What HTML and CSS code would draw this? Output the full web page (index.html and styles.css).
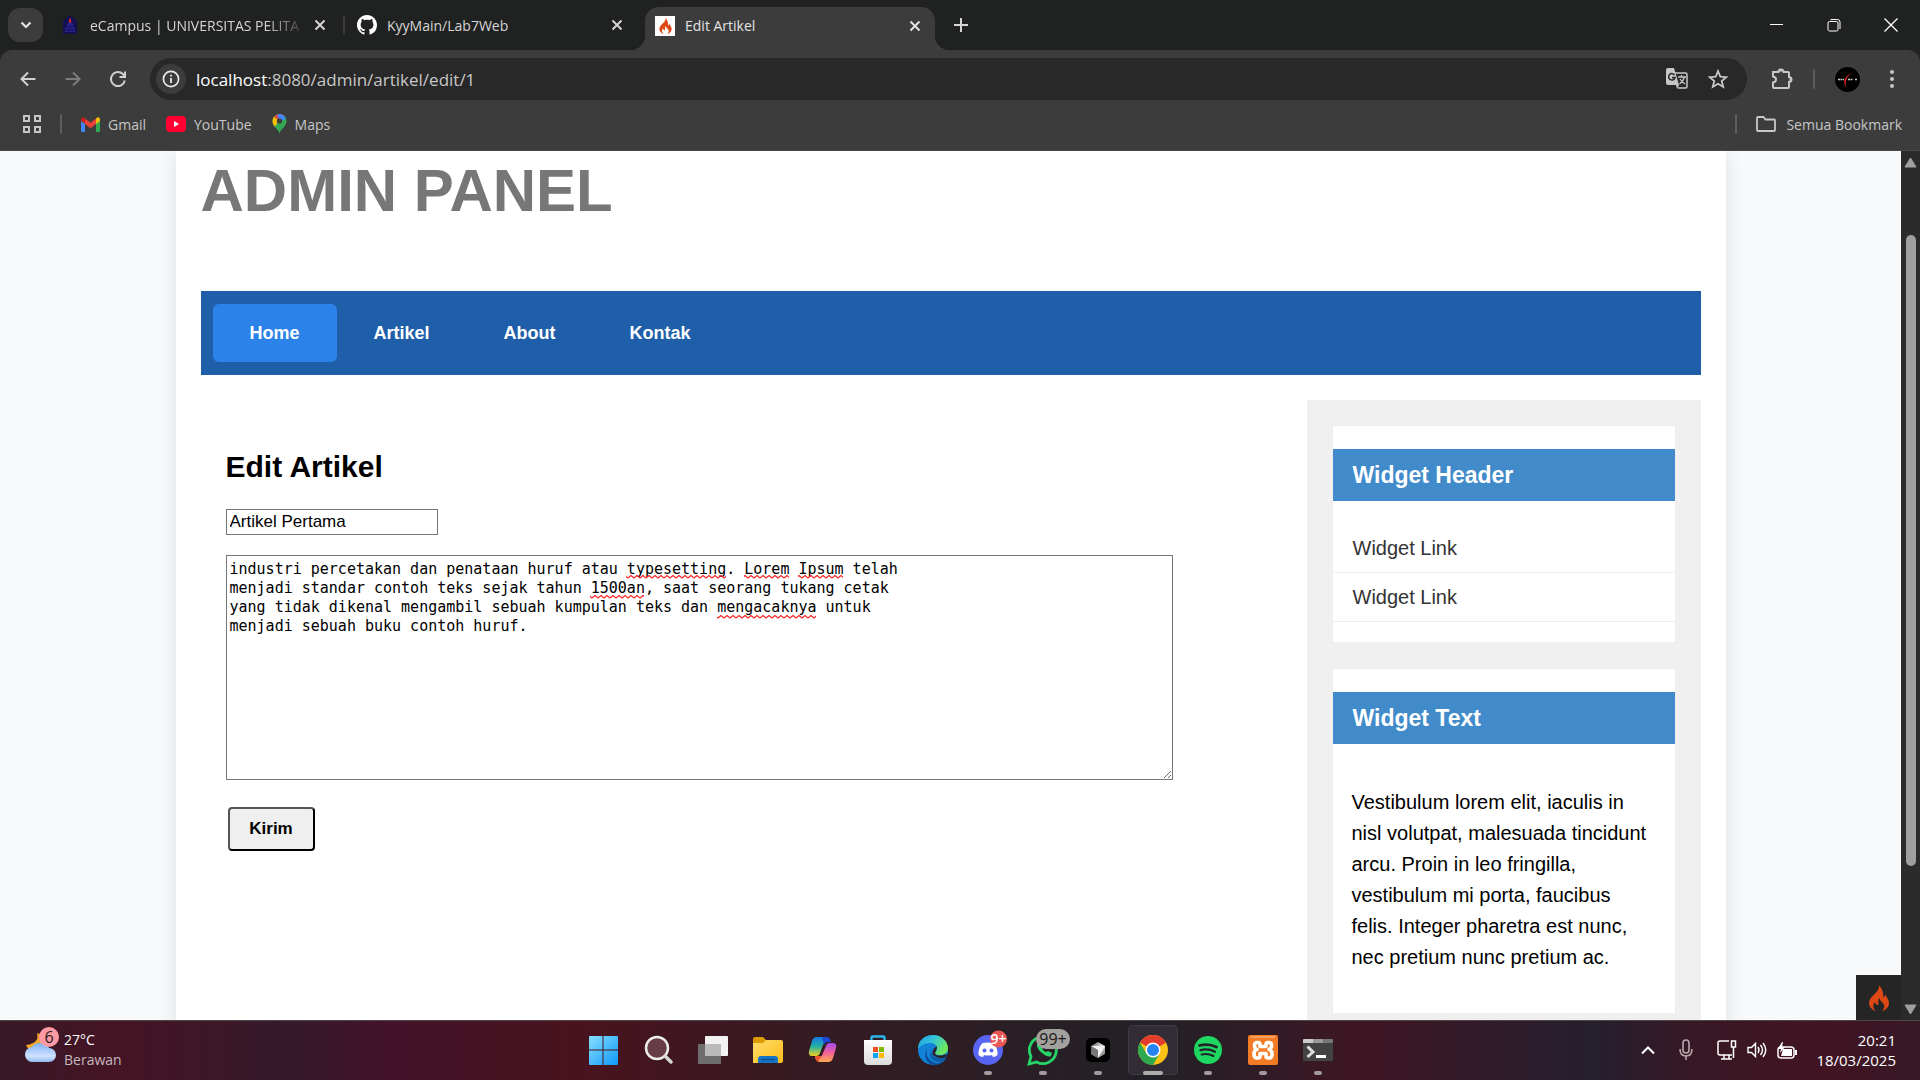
FILE: index.html
```html
<!DOCTYPE html>
<html lang="id">
<head>
<meta charset="utf-8">
<title>Edit Artikel</title>
<link rel="stylesheet" href="styles.css">
</head>
<body>
<svg width="0" height="0" class="defs" aria-hidden="true">
  <defs>
    <symbol id="flame" viewBox="0 0 20 26">
      <path fill="#dd4814" d="M9.500 0C11 3 8.500 6 5.500 9 2.500 12 0 14.500 0 18c0 3.500 2.500 6.300 6 7.800l.6-.5C5 24 4.300 22.800 4.300 21.200c0-1.700.9-3 1.800-4.400.2 1.600.8 2.700 1.800 3.100 1 .3 1.800-.5 1.600-1.600-.3-1.700-.6-3.300.9-5.300.5 2.300 1.500 3.200 2.900 4.500 2.400 2.300 2.900 5.300.2 7.700l.4.6C17.500 24.500 20 21.800 20 18c0-3.400-2.300-6-4-8.500-.2 1.400-.8 2.400-1.900 3C14.800 8.300 13.300 3 9.500 0z"/>
    </symbol>
    <symbol id="x" viewBox="0 0 12 12"><path d="M1.500 1.500l9 9M10.500 1.500l-9 9" stroke="currentColor" stroke-width="2"/></symbol>
    <linearGradient id="win" x1="0" y1="0" x2="1" y2="1"><stop offset="0" stop-color="#86e0ff"/><stop offset="1" stop-color="#0f97f8"/></linearGradient>
    <linearGradient id="cloud" x1="0" y1="0" x2="0" y2="1"><stop offset="0" stop-color="#7fb0f5"/><stop offset=".7" stop-color="#cfe2ff"/><stop offset="1" stop-color="#90b8f0"/></linearGradient>
    <linearGradient id="folder" x1="0" y1="0" x2="1" y2="1"><stop offset="0" stop-color="#ffdc6b"/><stop offset="1" stop-color="#fcbc16"/></linearGradient>
    <linearGradient id="copL" x1="0" y1="0" x2="0" y2="1"><stop offset="0" stop-color="#1478e8"/><stop offset=".5" stop-color="#25b3a0"/><stop offset="1" stop-color="#f0d020"/></linearGradient>
    <linearGradient id="copR" x1="0" y1="0" x2="0" y2="1"><stop offset="0" stop-color="#a04df0"/><stop offset=".5" stop-color="#f0609a"/><stop offset="1" stop-color="#ffa950"/></linearGradient>
    <linearGradient id="edgeT" x1="0" y1="0" x2="1" y2=".5"><stop offset="0" stop-color="#1b9de2"/><stop offset=".5" stop-color="#35c4d8"/><stop offset="1" stop-color="#6ee85a"/></linearGradient>
    <linearGradient id="store" x1="0" y1="0" x2="0" y2="1"><stop offset="0" stop-color="#fff"/><stop offset="1" stop-color="#dcdcdc"/></linearGradient>
    <linearGradient id="cube" x1="0" y1="0" x2="1" y2="1"><stop offset="0" stop-color="#555"/><stop offset=".5" stop-color="#ddd"/><stop offset="1" stop-color="#666"/></linearGradient>
    <pattern id="wave" width="6" height="4" patternUnits="userSpaceOnUse"><path d="M-1 1.800l1 1.200 3-2.500 3 2.500 1-1" fill="none" stroke="#f22" stroke-width="1.200"/></pattern>
  </defs>
</svg>

<header class="browser">
  <div class="tabstrip">
    <button class="tab-search" aria-label="Cari tab"><svg width="12" height="8" viewBox="0 0 12 8"><path d="M1.500 1.500L6 6l4.500-4.500" fill="none" stroke="#e3e3e3" stroke-width="2.200"/></svg></button>
    <div class="tab tab-first">
      <svg class="fav" viewBox="0 0 20 20"><path d="M3 19V7q7-12 14 0v12z" fill="#151052"/><path d="M5 17v-4l2-1V9l3-3 3 3v3l2 1v4z" fill="#26208a"/><path d="M10 3c-2 3-1 5 0 5s2-2 0-5z" fill="#d02a20"/><path d="M6 15h8M8 12h4" stroke="#100b3c"/></svg>
      <span class="tab-title fade">eCampus | UNIVERSITAS PELITA</span>
      <button class="tab-close" aria-label="Tutup"><svg width="12" height="12"><use href="#x"/></svg></button>
    </div>
    <i class="sep"></i>
    <div class="tab tab-second">
      <svg class="fav" viewBox="0 0 16 16"><path fill="#fff" d="M8 0C3.580 0 0 3.580 0 8c0 3.540 2.290 6.530 5.470 7.590.4.070.55-.17.55-.38 0-.19-.01-.82-.01-1.490-2.010.37-2.530-.49-2.690-.94-.09-.23-.48-.94-.82-1.130-.28-.15-.68-.52-.01-.53.63-.01 1.080.58 1.230.82.72 1.210 1.870.87 2.330.66.070-.52.28-.87.51-1.070-1.780-.2-3.640-.89-3.640-3.950 0-.87.31-1.590.82-2.150-.08-.2-.36-1.020.08-2.120 0 0 .67-.21 2.200.82.64-.18 1.320-.27 2-.27s1.360.09 2 .27c1.530-1.040 2.200-.82 2.200-.82.44 1.100.16 1.920.08 2.120.51.56.82 1.270.82 2.150 0 3.070-1.870 3.750-3.650 3.950.29.25.54.73.54 1.480 0 1.070-.01 1.930-.01 2.200 0 .21.15.46.55.38A8.010 8.010 0 0 0 16 8c0-4.420-3.580-8-8-8z"/></svg>
      <span class="tab-title">KyyMain/Lab7Web</span>
      <button class="tab-close" aria-label="Tutup"><svg width="12" height="12"><use href="#x"/></svg></button>
    </div>
    <div class="tab active">
      <span class="fav fav-ci"><svg width="13" height="16"><use href="#flame"/></svg></span>
      <span class="tab-title">Edit Artikel</span>
      <button class="tab-close" aria-label="Tutup"><svg width="12" height="12"><use href="#x"/></svg></button>
    </div>
    <button class="new-tab" aria-label="Tab baru"><svg width="14" height="14" viewBox="0 0 14 14"><path d="M7 0v14M0 7h14" stroke="#d5d5d5" stroke-width="2"/></svg></button>
    <div class="window-controls">
      <button aria-label="Minimalkan"><svg width="14" height="14"><path d="M0 6.500h13" stroke="#fff"/></svg></button>
      <button aria-label="Pulihkan"><svg width="14" height="14" fill="none" stroke="#fff"><rect x="1" y="3.500" width="10" height="9.500" rx="1.500"/><path d="M3.500 1.500h7q2.500 0 2.500 2.500v7"/></svg></button>
      <button aria-label="Tutup"><svg width="14" height="14"><path d="M.5.5l13 13M13.500.5l-13 13" stroke="#fff" stroke-width="1.300"/></svg></button>
    </div>
  </div>

  <div class="toolbar">
    <button class="tool" aria-label="Kembali"><svg width="16" height="16" viewBox="0 0 16 16" fill="none" stroke="#d0d0d0" stroke-width="2"><path d="M15.500 8H2M8 1.500L1.500 8 8 14.500"/></svg></button>
    <button class="tool" aria-label="Maju"><svg width="16" height="16" viewBox="0 0 16 16" fill="none" stroke="#7c7c7c" stroke-width="2"><path d="M.5 8H14M8 1.500L14.500 8 8 14.500"/></svg></button>
    <button class="tool" aria-label="Muat ulang"><svg width="16" height="16" viewBox="0 0 16 16" fill="none" stroke="#d0d0d0" stroke-width="2"><path d="M14.800 9.500A7 7 0 1 1 13 3.200L15 5.500M15 .5v5.500H9.500"/></svg></button>
    <div class="omnibox">
      <button class="site-info" aria-label="Info situs"><svg width="18" height="18" viewBox="0 0 18 18"><circle cx="9" cy="9" r="7.600" fill="none" stroke="#e8e8e8" stroke-width="1.700"/><path d="M9 8v5M9 4.800v1.800" stroke="#e8e8e8" stroke-width="1.800"/></svg></button>
      <span class="url"><span class="host">localhost</span>:8080/admin/artikel/edit/1</span>
      <button class="plain" aria-label="Terjemahkan"><svg width="22" height="22" viewBox="0 0 22 22"><path d="M9 5h10.500q1.500 0 1.500 1.500v12q0 1.500-1.500 1.500H12" fill="none" stroke="#c7c7c7" stroke-width="1.500"/><path d="M2 0h6l5 17H2q-2 0-2-2V2q0-2 2-2zM10 17h3l-2 4z" fill="#c7c7c7"/><path d="M8.500 7A3.200 3.200 0 1 0 9 9.500H6" fill="none" stroke="#282828" stroke-width="1.500"/><path d="M12 9h8M15.500 7v2M18.500 9q-1 4-5 7M14 11q2 3 5 5" fill="none" stroke="#c7c7c7" stroke-width="1.300"/></svg></button>
      <button class="plain" aria-label="Tandai"><svg width="20" height="20" viewBox="0 0 20 20"><path d="M10 2l2.300 5.600 6 .5-4.600 3.900 1.500 5.900L10 14.700 4.800 17.900l1.500-5.900L1.700 8.100l6-.5z" fill="none" stroke="#c7c7c7" stroke-width="1.800"/></svg></button>
    </div>
    <button class="ext" aria-label="Ekstensi"><svg width="22" height="22" viewBox="0 0 22 22"><path d="M2 4h5.500a2.500 2.500 0 0 1 5 0H17q1 0 1 1v4a2.500 2.500 0 0 1 0 5v5q0 1-1 1H3q-1 0-1-1v-4.500q3-.500 3-3T2 8.500z" fill="none" stroke="#c7c7c7" stroke-width="2"/><path d="M7.500 3.500a2.500 2.500 0 0 1 5 0zM18.500 9a2.500 2.500 0 0 1 0 5z" fill="#c7c7c7"/></svg></button>
    <i class="sep"></i>
    <button class="avatar" aria-label="Profil"><svg width="25" height="25" viewBox="0 0 25 25"><circle cx="12.500" cy="12.500" r="12.500" fill="#000"/><path d="M20 3.500Q12 8 11 14T11.500 21Q8.500 17 9.500 13T20 3.500z" fill="#e8281e"/><path d="M3 12.500h6M13 12.500h5M20 12.500h2" stroke="#ccc" stroke-width="1.300" stroke-dasharray="2 .5"/></svg></button>
    <button class="dots" aria-label="Menu"><svg width="4" height="18"><g fill="#c7c7c7"><circle cx="2" cy="2" r="2"/><circle cx="2" cy="9" r="2"/><circle cx="2" cy="16" r="2"/></g></svg></button>
  </div>

  <nav class="bookmarks">
    <button class="apps" aria-label="Aplikasi"><svg width="18" height="18" fill="none" stroke="#c7c7c7" stroke-width="2"><path d="M1 1h5v5H1zM12 1h5v5h-5zM1 12h5v5H1zM12 12h5v5h-5z"/></svg></button>
    <i class="sep"></i>
    <a href="#gmail"><svg width="19" height="15" viewBox="0 0 19 15"><path d="M0 3v10.500Q0 15 1.500 15H4V6z" fill="#4285f4"/><path d="M19 3v10.500q0 1.500-1.500 1.500H15V6z" fill="#34a853"/><path d="M15 1.500V7l4-3V2q-1-3-4-.5z" fill="#fbbc04"/><path d="M4 1.500V7L0 4V2Q1-1 4 1.500z" fill="#c5221f"/><path d="M4 1.500l5.500 4.300L15 1.500V7l-5.500 4.300L4 7z" fill="#ea4335"/></svg>Gmail</a>
    <a href="#youtube"><svg width="20" height="16"><rect width="20" height="16" rx="4" fill="#f03"/><path d="M8 5l5 3-5 3z" fill="#fff"/></svg>YouTube</a>
    <a href="#maps"><svg width="15" height="20" viewBox="0 0 15 20"><path d="M7.500 20C7 15 .5 13 .5 7a7 7 0 0 1 14 0c0 6-6.500 8-7 13z" fill="#34a853"/><path d="M.5 7A7 7 0 0 1 2 2.700L7 7l-4.500 5.500Q.5 10 .5 7z" fill="#fbbc04"/><path d="M2.200 2.500L7 7 12.500 2A7 7 0 0 0 2.200 2.500z" fill="#ea4335"/><path d="M5 .5a7 7 0 0 1 9 4L8 8z" fill="#4285f4"/><circle cx="7.500" cy="7" r="2.600" fill="#3c3c3c"/></svg>Maps</a>
    <span class="spacer"></span>
    <i class="sep"></i>
    <a href="#semua" class="all-bookmarks"><svg width="20" height="16" fill="none" stroke="#c7c7c7" stroke-width="1.800"><path d="M1 14V2q0-1 1-1h5.500l2 2.500H18q1 0 1 1V14q0 1-1 1H2q-1 0-1-1z"/></svg>Semua Bookmark</a>
  </nav>
</header>

<div class="viewport">
  <div class="page">
    <div class="container">
      <h1>ADMIN PANEL</h1>
      <nav class="menu">
        <a href="#home" class="current">Home</a>
        <a href="#artikel">Artikel</a>
        <a href="#about">About</a>
        <a href="#kontak">Kontak</a>
      </nav>
      <div class="columns">
        <main>
          <h2>Edit Artikel</h2>
          <form>
            <input type="text" name="judul" aria-label="Judul" value="Artikel Pertama">
            <div class="editor">
              <textarea name="isi" aria-label="Isi" spellcheck="false">industri percetakan dan penataan huruf atau typesetting. Lorem Ipsum telah
menjadi standar contoh teks sejak tahun 1500an, saat seorang tukang cetak
yang tidak dikenal mengambil sebuah kumpulan teks dan mengacaknya untuk
menjadi sebuah buku contoh huruf.</textarea>
              <svg class="squiggles" width="700" height="80" fill="url(#wave)" aria-hidden="true">
                <rect x="400" y="20" width="100" height="4"/>
                <rect x="518" y="20" width="45" height="4"/>
                <rect x="572" y="20" width="45" height="4"/>
                <rect x="364" y="40" width="54" height="4"/>
                <rect x="491" y="60" width="99" height="4"/>
              </svg>
            </div>
            <button type="button" class="submit">Kirim</button>
          </form>
        </main>
        <aside>
          <section class="widget">
            <h3>Widget Header</h3>
            <ul>
              <li><a href="#link1">Widget Link</a></li>
              <li><a href="#link2">Widget Link</a></li>
            </ul>
          </section>
          <section class="widget">
            <h3>Widget Text</h3>
            <p>Vestibulum lorem elit, iaculis in nisl volutpat, malesuada tincidunt arcu. Proin in leo fringilla, vestibulum mi porta, faucibus felis. Integer pharetra est nunc, nec pretium nunc pretium ac.</p>
          </section>
        </aside>
      </div>
    </div>
    <button class="debug" aria-label="Debug"><svg width="20" height="26"><use href="#flame"/></svg></button>
  </div>
  <div class="scrollbar">
    <svg width="13" height="11"><path d="M6.500 1L12 10H1z" fill="#9f9f9f" stroke="#9f9f9f" stroke-linejoin="round"/></svg>
    <div class="track"><div class="thumb"></div></div>
    <svg width="13" height="11"><path d="M6.500 10L12 1H1z" fill="#9f9f9f" stroke="#9f9f9f" stroke-linejoin="round"/></svg>
  </div>
</div>

<footer class="taskbar">
  <div class="weather">
    <svg width="36" height="40" viewBox="0 0 36 40"><path d="M12 7q3 10-11 12 2 6 9 5 9-2 9-10-2-6-7-7z" fill="#f5a52a"/><path d="M8 36a7.500 7.500 0 0 1-1-15Q9 17 15 17q7 0 9 5a7 7 0 0 1 0 14z" fill="url(#cloud)"/><circle cx="24" cy="11" r="10" fill="#ff99a4"/><text x="24" y="17" text-anchor="middle" class="badge-dark">6</text></svg>
    <div><div>27°C</div><div class="muted">Berawan</div></div>
  </div>

  <div class="apps-row">
    <button class="app" aria-label="Mulai"><svg width="30" height="30"><path fill="url(#win)" d="M1 2q0-1 1-1h12.500v13.500H1zM15.500 1H29q1 0 1 1v12.500H15.500zM1 15.500h13.500V30H2q-1 0-1-1zM15.500 15.500H30V29q0 1-1 1H15.500z"/></svg></button>
    <button class="app" aria-label="Cari"><svg width="30" height="30"><circle cx="14" cy="13" r="11" fill="#673e48" stroke="#ededed" stroke-width="2.500"/><path d="M22 21l6 6" stroke="#d8d8d8" stroke-width="3.500" stroke-linecap="round"/></svg></button>
    <button class="app" aria-label="Tampilan tugas"><svg width="30" height="30"><rect x="7" y="1" width="23" height="20" rx="1" fill="#f2f2f2"/><rect x="0" y="9" width="23" height="20" rx="1" fill="#6d6d6d"/><rect x="7" y="9" width="16" height="12" fill="#bababa"/></svg></button>
    <button class="app" aria-label="File Explorer"><svg width="30" height="30"><path d="M0 8V4q0-2 2-2h8l4 4v4H0z" fill="#dd9b04"/><path d="M0 8h10l3-3h15q2 0 2 2v19q0 2-2 2H0z" fill="url(#folder)"/><path d="M5 28v-4q0-3 3-3h14q3 0 3 3v4z" fill="#1474c4"/><path d="M9 24.500h12" stroke="#0c4f8e" stroke-width="1.500" stroke-linecap="round"/></svg></button>
    <button class="app" aria-label="Copilot"><svg width="30" height="30"><path d="M9 2h9q3 0 4 5h-4q-2 0-3 3l-3 8q-1 3-4 3H4q-4 0-3-5L4 6q1-4 5-4z" fill="url(#copL)"/><path d="M14 2h5q3 0 4 5h-4q-2 0-3 3z" fill="#2048d8"/><path d="M22 8h3q4 0 3 5l-3 10q-1 4-5 4h-8q-4 0-5-5h4q3 0 4-4l3-7q1-3 4-3z" fill="url(#copR)"/><path d="M8 21h5l-2 4q-1 2 1 2Q8 27 7 21z" fill="#f0502a"/></svg></button>
    <button class="app" aria-label="Microsoft Store"><svg width="30" height="30"><path d="M8.500 6V2.500q0-1 1-1h11q1 0 1 1V6" fill="none" stroke="#2cb7ec" stroke-width="2.400"/><path d="M1 5h28v21q0 4-4 4H5q-4 0-4-4z" fill="url(#store)"/><path fill="#f25022" d="M10 12h5v5h-5z"/><path fill="#7fba00" d="M16 12h5v5h-5z"/><path fill="#00a4ef" d="M10 18h5v5h-5z"/><path fill="#ffb900" d="M16 18h5v5h-5z"/></svg></button>
    <button class="app" aria-label="Edge"><svg width="30" height="30"><circle cx="15" cy="15" r="15" fill="#1182d8"/><path d="M0 14C0 5 7 0 15 0s15 6 15 13c0 5-4 7-8 7-3 0-5-1-5-2s2-2 2-5c0-3-3-5-7-5-6 0-10 3-12 6z" fill="url(#edgeT)"/><path d="M12 11c-6 4-4 14 5 17 5 1 8-1 11-5-1 4-6 7-11 7C10 30 5 23 8 16q1-3 4-5z" fill="#0d4f9e"/><path d="M17 12q-5 3-3 7c2 4 8 5 13 2l1 1q-1 3-4 5-10 1-12-7 0-6 5-8z" fill="#0e5eaa"/><path d="M19 11q0 4-2 7 0 3 7 2.500l5-1.500-1 3q-7 3-13-2-2-5 4-9z" fill="#2c2024"/></svg></button>
    <button class="app run" aria-label="Discord"><svg width="36" height="36" viewBox="-3 -3 36 36"><circle cx="15" cy="15" r="15" fill="#5865f2"/><path d="M10 8q5-1 10 0l1.500 1Q25 14 24.500 20q-2 2-4.500 2l-1-2q-4 1-8 0l-1 2q-2.500 0-4.500-2Q5 14 8.500 9z" fill="#fff"/><circle cx="11.500" cy="15.500" r="2" fill="#5865f2"/><circle cx="18.500" cy="15.500" r="2" fill="#5865f2"/><circle cx="25.500" cy="4" r="8.500" fill="#eb5757"/><text x="25.500" y="9" text-anchor="middle" class="badge-light">9+</text></svg></button>
    <button class="app run" aria-label="WhatsApp"><svg width="50" height="36" viewBox="-10 -3 50 36"><path d="M1 29l2-7.500A13.500 13.500 0 1 1 8.500 27z" fill="none" stroke="#25d366" stroke-width="2.800"/><path d="M9 9q-1 4 5 9t9 3l1-3-4-2-2 1q-3-1-4-4l1-2-2-4z" fill="#25d366"/><rect x="8" y="-6" width="34" height="20" rx="10" fill="#a3a19d"/><text x="25" y="10" text-anchor="middle" class="badge-dark">99+</text></svg></button>
    <button class="app run" aria-label="Cursor"><svg width="30" height="30"><rect x="3" y="3" width="24" height="24" rx="5" fill="#000"/><path d="M15 7l7 4v8l-7 4-7-4v-8z" fill="url(#cube)"/><path d="M8 11h14l-7 12v-8z" fill="#f2f2f2"/><path d="M8 11l7 4v8l-7-4z" fill="#777"/></svg></button>
    <button class="app run focused" aria-label="Chrome"><svg width="30" height="30"><circle cx="15" cy="15" r="15" fill="#fbc116"/><path d="M15 15L2 7.500A15 15 0 0 1 28 7.500z" fill="#e33b2e"/><path d="M15 7.500h13L15 15z" fill="#e33b2e"/><path d="M2 7.500A15 15 0 0 0 15 30l6.500-11.200L8.500 18.800z" fill="#2da94f"/><circle cx="15" cy="15" r="7.500" fill="#fff"/><circle cx="15" cy="15" r="6" fill="#2684f0"/></svg></button>
    <button class="app run" aria-label="Spotify"><svg width="30" height="30" fill="none" stroke="#23232a" stroke-linecap="round"><circle cx="15" cy="15" r="14" fill="#1ed760" stroke="none"/><path d="M6.500 10.500q9-2.500 17 1.500" stroke-width="2.800"/><path d="M7.500 15.200q7.500-2 14.500 1.500" stroke-width="2.300"/><path d="M8.500 19.500q6.500-1.500 12 1.500" stroke-width="2"/></svg></button>
    <button class="app run" aria-label="XAMPP"><svg width="30" height="30"><rect width="30" height="30" rx="2" fill="#f47b25"/><path d="M3 2h24" stroke="#ffc79d"/><path d="M12 11.500V9.500Q12 7.500 10 7.500H9Q6.500 7.500 6.500 10.500T9 14.500Q6 15 6 19t3 4h1q2 0 2-2v-2.500h6V21q0 2 2 2h1q3 0 3-4t-3-4.500q2.500-1 2.500-4T21 7.500h-1q-2 0-2 2v2z" fill="none" stroke="#fff" stroke-width="3.600" stroke-linejoin="round"/></svg></button>
    <button class="app run" aria-label="Terminal"><svg width="30" height="30"><rect y="4" width="30" height="22" rx="1.500" fill="#434343"/><path d="M0 8V5q0-1 1-1h9v4z" fill="#ccc"/><path d="M10 4h10v4H10z" fill="#999"/><path d="M20 4h9q1 0 1 1v3H20z" fill="#777"/><path d="M4.500 11.500L10 17l-5.500 5" fill="none" stroke="#ddd" stroke-width="3"/><path d="M13 21.500h10" stroke="#fff" stroke-width="3"/></svg></button>
  </div>

  <div class="tray">
    <button aria-label="Ikon tersembunyi"><svg width="14" height="10"><path d="M1 8.500l6-6 6 6" fill="none" stroke="#fff" stroke-width="2"/></svg></button>
    <button aria-label="Mikrofon"><svg width="14" height="22" fill="none" stroke="#b9a9af" stroke-width="1.600"><rect x="4" y="1" width="6" height="13" rx="3"/><path d="M1 10q0 7 6 7t6-7M7 17v4"/></svg></button>
    <span class="status">
      <svg width="20" height="20" fill="none" stroke="#fff" stroke-width="1.500"><path d="M12 1H3Q1 1 1 3v10q0 2 2 2h12M4 19h11M7 15v4M12 15v4M14.500 1h4v6h-4zM16.500 7v11"/></svg>
      <svg width="20" height="18" fill="none" stroke="#fff" stroke-width="1.400"><path d="M1 6.500h3.500l4-4v13l-4-4H1zM11 6q2 3 0 6M13.500 4q4 5 0 10M16 2q5.500 7 0 14"/></svg>
      <svg width="21" height="17"><rect x="1" y="5" width="16" height="11" rx="3" fill="none" stroke="#fff" stroke-width="1.500"/><path d="M6 7h9v7H4zM18 8h2v5h-2z" fill="#fff"/><path d="M5 0L1 7h3l-1 4 5-6H5l1-5z" fill="#fff"/></svg>
    </span>
    <div class="clock"><div>20:21</div><div>18/03/2025</div></div>
  </div>
</footer>
</body>
</html>
```
FILE: styles.css
```css
* { box-sizing: border-box; }

body {
  margin: 0;
  height: 100vh;
  overflow: hidden;
  display: grid;
  grid-template-rows: auto minmax(0, 1fr) auto;
  font-family: "Liberation Sans", Arial, sans-serif;
  font-size: 20px;
  color: #000;
}

.defs { position: absolute; }
svg { display: block; flex: none; overflow: visible; }
button { font: inherit; color: inherit; margin: 0; padding: 0; border: 0; background: none; }
a { text-decoration: none; }

/* Browser frame */
.browser {
  background: #202221;
  color: #d5d5d5;
  font-family: "Open Sans", sans-serif;
  font-size: 14px;
}
.tabstrip { display: flex; align-items: center; height: 50px; padding-left: 8px; }
.tab-search {
  display: grid;
  place-items: center;
  width: 35px;
  height: 34px;
  border-radius: 12px;
  background: #3c3c3c;
}
.tab { display: flex; align-items: center; gap: 10px; }
.tab-first { width: 300px; padding: 0 17px; }
.tab-second { width: 300px; padding: 0 22px 0 12px; }
.fav { width: 20px; height: 20px; flex: none; }
.fav-ci { display: grid; place-items: center; background: #fff; }
.tab-title { flex: 1; min-width: 0; overflow: hidden; white-space: nowrap; }
.fade { mask-image: linear-gradient(90deg, #000 82%, transparent 102%); }
.tab-close { width: 12px; }
.active {
  position: relative;
  align-self: flex-end;
  width: 290px;
  height: 43px;
  padding: 0 14px 6px 10px;
  border-radius: 14px 14px 0 0;
  background: #3c3c3c;
  color: #e3e3e3;
}
.active::before, .active::after {
  content: "";
  position: absolute;
  bottom: 0;
  width: 14px;
  height: 14px;
}
.active::before { right: 100%; background: radial-gradient(circle at 0 0, transparent 14px, #3c3c3c 14px); }
.active::after { left: 100%; background: radial-gradient(circle at 100% 0, transparent 14px, #3c3c3c 14px); }
.new-tab { margin-left: 19px; }
.sep { flex: none; width: 2px; height: 20px; border-radius: 1px; background: #5c5c5c; }
.tabstrip .sep { background: #3c3c3c; }
.window-controls { display: flex; margin-left: auto; padding-right: 1px; }
.window-controls button { display: grid; place-items: center; width: 57px; height: 48px; }

.toolbar {
  display: flex;
  align-items: center;
  height: 50px;
  padding: 8px 26px 0 5px;
  border-radius: 12px 12px 0 0;
  background: #3c3c3c;
}
.tool { display: grid; place-items: center; width: 45px; height: 42px; }
.omnibox {
  flex: 1;
  display: flex;
  align-items: center;
  gap: 20px;
  height: 42px;
  margin-left: 10px;
  padding: 0 19px 0 6px;
  border-radius: 21px;
  background: #282828;
}
.site-info {
  display: grid;
  place-items: center;
  width: 30px;
  height: 30px;
  border-radius: 15px;
  background: #3c3c3c;
}
.url { flex: 1; margin-left: -10px; font-size: 17px; color: #c7c7c7; }
.host { color: #fff; }
.ext { margin: 0 20px 0 24px; }
.avatar { margin: 0 30px 0 20px; }

.bookmarks {
  display: flex;
  align-items: center;
  height: 51px;
  padding: 0 18px 2px 23px;
  border-bottom: 1px solid #4a4747;
  background: #3c3c3c;
}
.bookmarks a { display: flex; align-items: center; gap: 8px; margin-right: 20px; color: #c7c7c7; }
.bookmarks .sep { margin: 0 19px; }
.bookmarks .all-bookmarks { gap: 10px; margin-right: 0; }
.spacer { flex: 1; }

/* Site */
.viewport { display: flex; min-height: 0; }
.page {
  position: relative;
  flex: 1;
  display: flex;
  justify-content: center;
  overflow: hidden;
  background: #f8f9fb;
}
.container {
  width: 82%;
  max-width: 1550px;
  align-self: flex-start;
  padding: 6px 25px 25px;
  background: #fff;
  box-shadow: 0 0 18px rgba(0, 0, 0, .1);
}
h1 { margin: 0 0 66px; font-size: 60px; line-height: 68px; color: #777; }
.menu { display: flex; padding: 13px 12px; background: #1f5faa; }
.menu a {
  padding: 19px 37px;
  border-radius: 6px;
  font-size: 18px;
  line-height: 20px;
  font-weight: bold;
  color: #fff;
}
.menu .current { background: #2b83ea; }
.columns { display: grid; grid-template-columns: minmax(0, 1fr) 394px; margin-top: 25px; }
main { padding: 49px 25px 25px; }
h2 { margin: 0 0 25px; font-size: 30px; line-height: 35px; }
form { display: flex; flex-direction: column; align-items: flex-start; }
input {
  width: 212px;
  height: 26px;
  margin-bottom: 20px;
  padding: 1px 3px;
  border: 1px solid #767676;
  border-radius: 0;
  font: 17px "Liberation Sans", Arial, sans-serif;
}
.editor { position: relative; width: 90%; max-width: 947px; }
textarea {
  display: block;
  width: 100%;
  height: 225px;
  padding: 4px 3px;
  border: 1px solid #767676;
  font: 15px/19px "DejaVu Sans Mono", monospace;
  color: #000;
}
.squiggles { position: absolute; top: 0; left: 0; pointer-events: none; }
.submit {
  margin: 27px 2px 0;
  width: 87px;
  height: 44px;
  border: 2px solid;
  border-color: #555 #000 #000 #555;
  border-radius: 4px;
  background: #efefef;
  font-size: 17px;
  font-weight: bold;
}
aside { padding: 25px; background: #f0f0f0; }
.widget { margin-bottom: 25px; padding-top: 23px; border: 1px solid #eee; background: #fff; }
h3 {
  margin: 0;
  padding: 12px 20px;
  background: #428bca;
  font-size: 23px;
  line-height: 28px;
  color: #fff;
}
.widget ul { margin: 0; padding: 23px 0 20px; list-style: none; }
.widget li { border-bottom: 1px solid #eee; }
.widget li a { display: block; padding: 12px 20px; line-height: 24px; color: #333; }
.widget p { margin: 0; padding: 43px 19px 40px; line-height: 31px; }
.debug {
  position: absolute;
  right: 0;
  bottom: 0;
  display: grid;
  place-items: center;
  width: 45px;
  height: 45px;
  background: #252525;
}
.scrollbar {
  display: flex;
  flex-direction: column;
  align-items: center;
  width: 19px;
  padding: 6px 0 5px;
  background: #2b2b2b;
}
.track { flex: 1; padding-top: 67px; }
.thumb { width: 10px; height: 82%; border-radius: 5px; background: #9f9f9f; }

/* Taskbar */
.taskbar {
  display: grid;
  grid-template-columns: 1fr auto 1fr;
  align-items: center;
  height: 60px;
  padding-bottom: 1px;
  border-top: 1px solid #514548;
  background: linear-gradient(90deg, #381926, #451425 6%, #351a2a 15%, #42132a 20%, #49131e 30%, #3a1922 39%, #2d1e24 50%, #212127 60%, #2f1c25 65%, #3f1624 71%, #251f2e 83%, #371825 88%, #421423 95%, #371826);
  font-family: "Open Sans", sans-serif;
  font-size: 14px;
  line-height: 20px;
  color: #fff;
}
.weather { display: flex; align-items: center; gap: 3px; padding-left: 25px; }
.weather svg { margin-bottom: 8px; }
.muted { color: #c5b8bd; }
.badge-dark { font-size: 16px; fill: #1a1a1a; }
.badge-light { font-size: 14px; font-weight: 600; fill: #fff; }
.apps-row { display: flex; gap: 5px; }
.app {
  position: relative;
  display: grid;
  place-items: center;
  width: 50px;
  height: 50px;
  border-radius: 5px;
}
.run::after {
  content: "";
  position: absolute;
  bottom: 0;
  width: 8px;
  height: 4px;
  border-radius: 2px;
  background: #a29a9e;
}
.focused { background: #322c34; box-shadow: inset 0 0 0 1px #403a41; }
.focused::after { width: 20px; background: #b0aca9; }
.tray { display: flex; justify-content: flex-end; align-items: center; gap: 24px; padding-right: 24px; }
.status { display: flex; align-items: center; gap: 10px; }
.clock { width: 80px; margin-left: -6px; font-size: 15px; text-align: right; }
```
